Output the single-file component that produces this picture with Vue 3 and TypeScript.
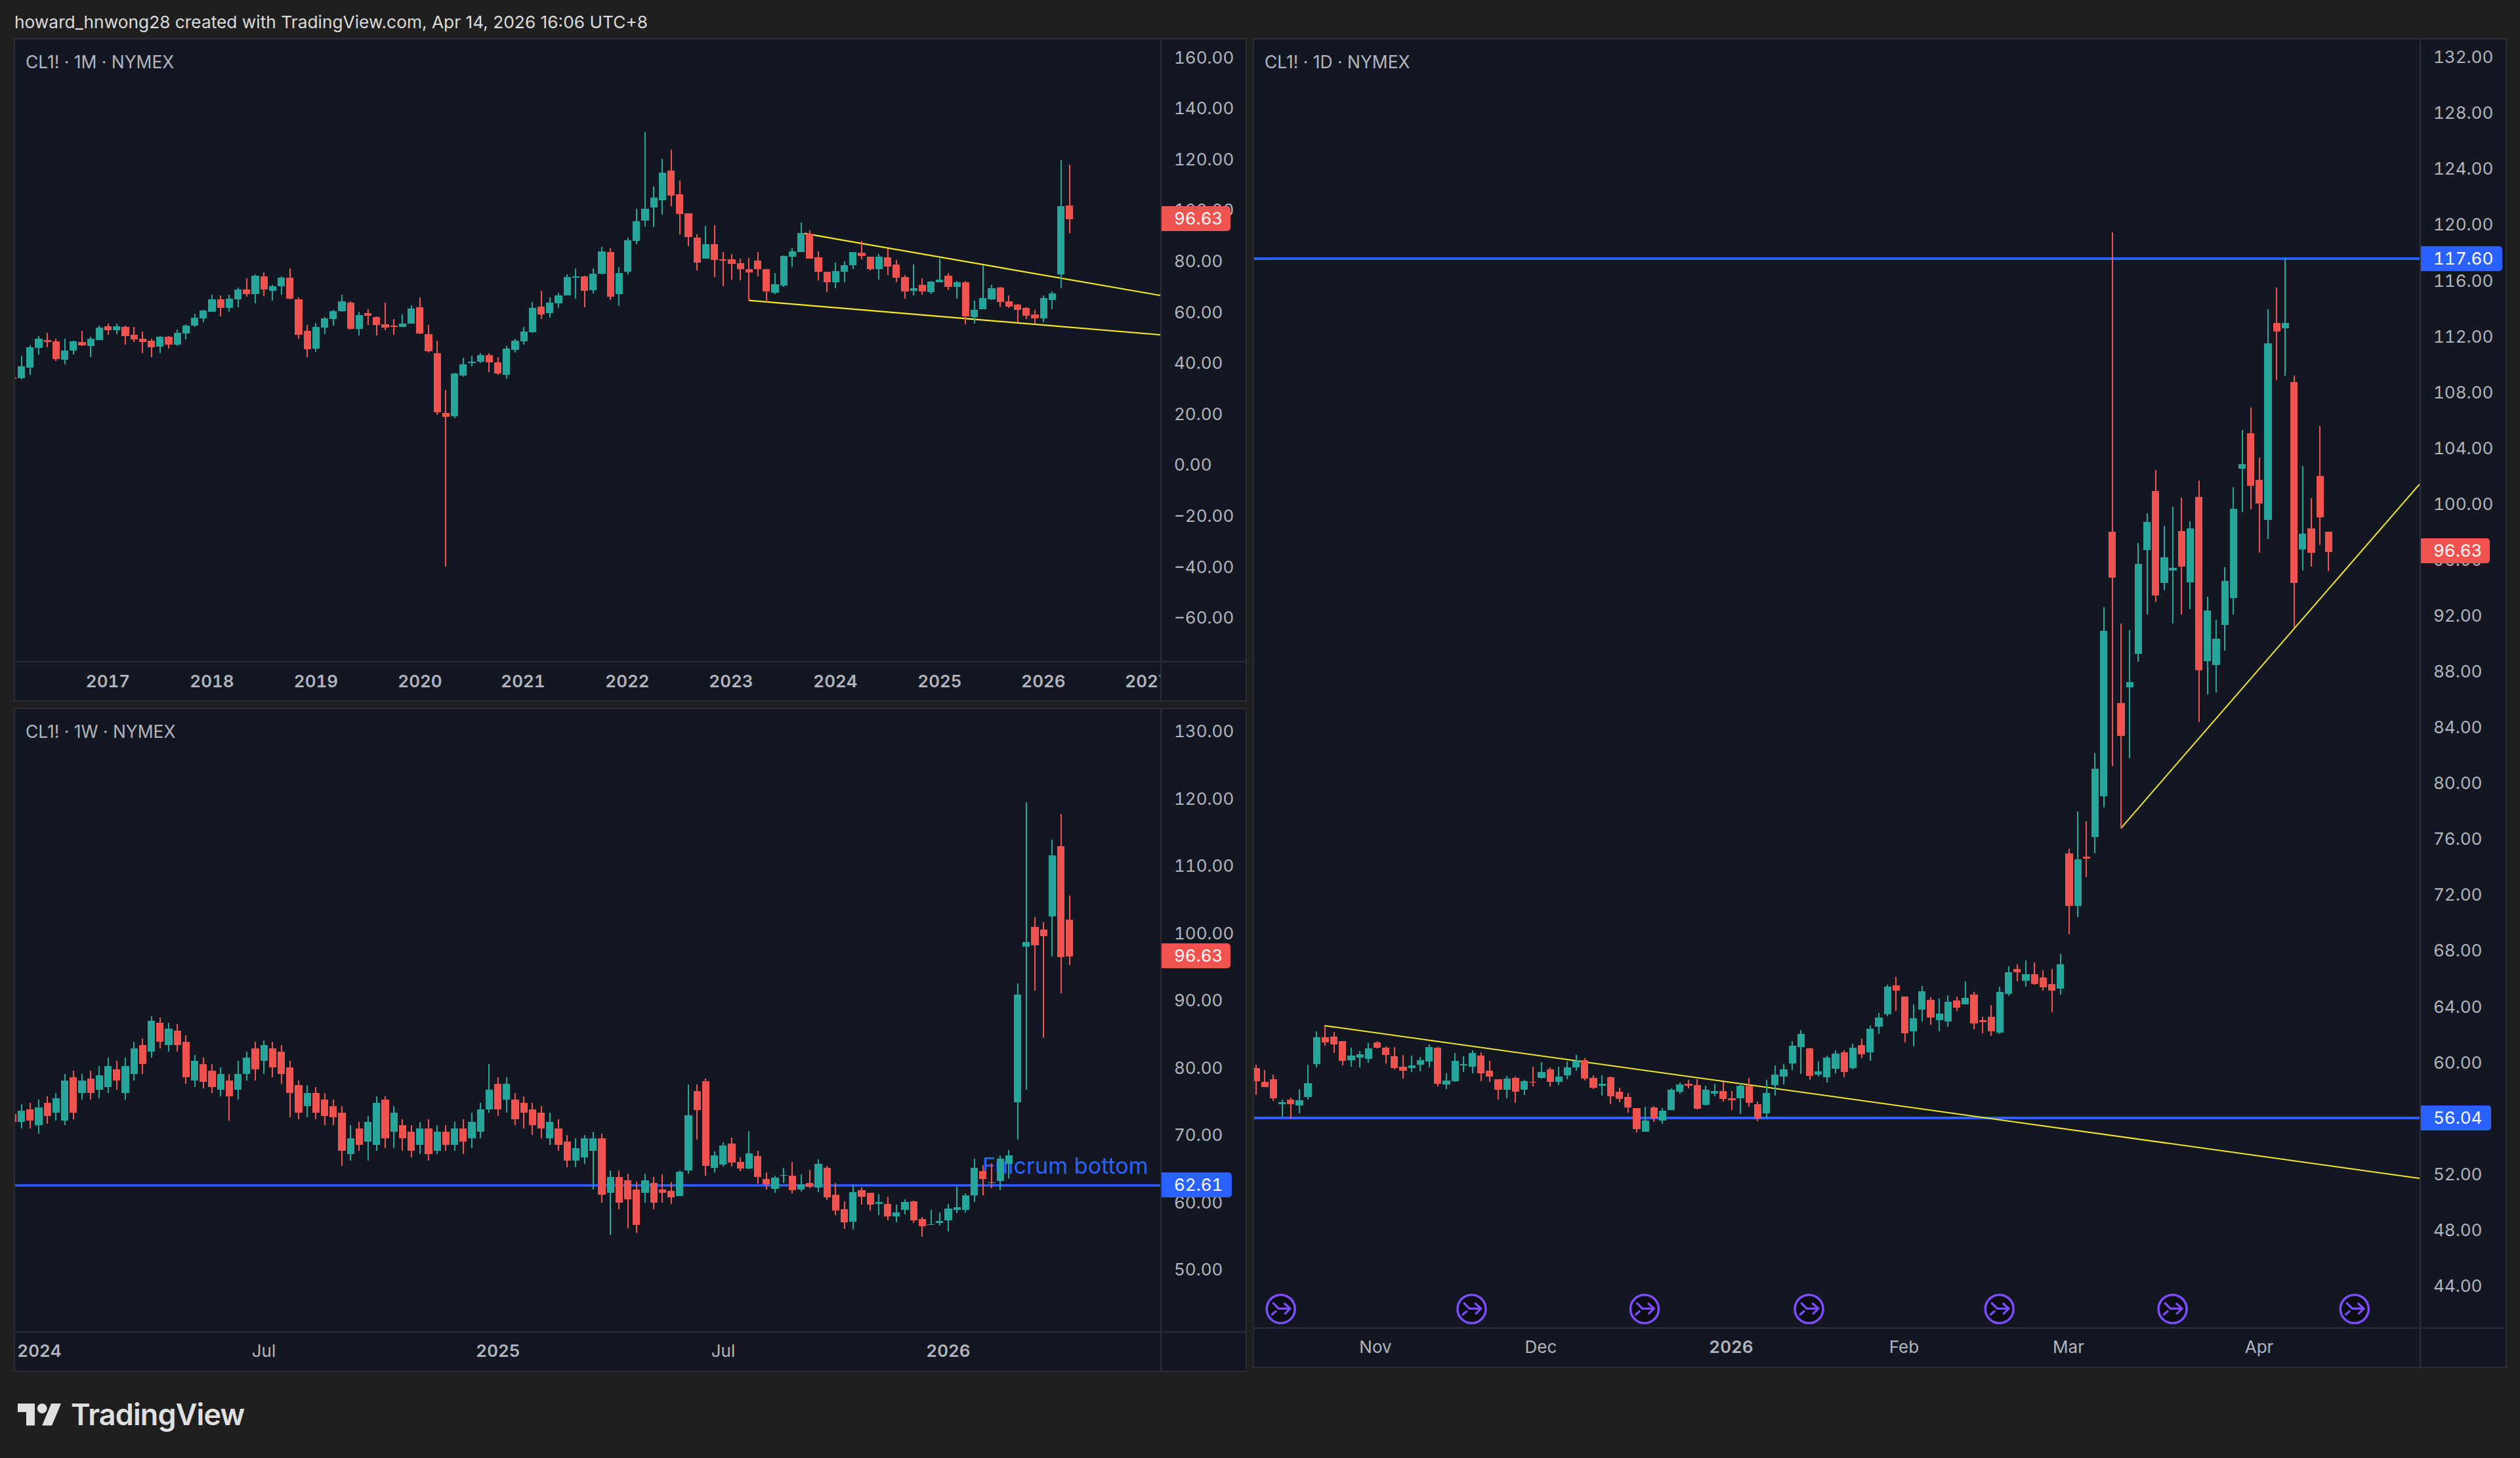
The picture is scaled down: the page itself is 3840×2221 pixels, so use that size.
<template>
  <div class="page">
    <div class="header">howard_hnwong28 created with TradingView.com, Apr 14, 2026 16:06 UTC+8</div>

    <div class="charts">
      <section v-for="chart in charts" :key="chart.label" class="panel" :class="chart.cls">
        <div class="pane">
          <svg class="plot" :viewBox="`${chart.x} ${chart.y} ${chart.w} ${chart.h}`">
            <line
              v-for="(l, i) in chart.lines"
              :key="i"
              :x1="l.x1"
              :y1="l.y1"
              :x2="l.x2"
              :y2="l.y2"
              :stroke="l.color"
              :stroke-width="l.width"
            />
            <text v-if="chart.note" class="note" :x="chart.note.x" :y="chart.note.y">{{ chart.note.text }}</text>
            <g v-for="(c, i) in chart.candles" :key="i" :fill="c[4] ? UP : DOWN" shape-rendering="crispEdges">
              <rect :x="chart.x0 + i * chart.dx - 1" :y="c[2]" width="2" :height="c[3] - c[2]" />
              <rect :x="chart.x0 + i * chart.dx - 5.6" :y="c[0]" width="11.2" :height="c[1] - c[0]" />
            </g>
            <g v-for="x in chart.events" :key="x" :transform="`translate(${x} 1994)`">
              <circle r="21.5" fill="#0c0d12" stroke="#7e4dff" stroke-width="3.5" />
              <path
                d="M-12.3 -9.7 L-3.3 -.7 H14.3 M5 -9 L14.3 -.7 L5.7 8 M-14.3 9.3 L-6.7 2.7"
                fill="none"
                stroke="#7e4dff"
                stroke-width="3.2"
              />
            </g>
          </svg>
          <div class="title">{{ chart.label }}</div>
        </div>

        <div class="price-axis">
          <span v-for="p in chart.prices" :key="p.text" class="tick" :style="{ top: p.y - chart.y - 15 + 'px' }">{{ p.text }}</span>
          <span
            v-for="t in chart.tags"
            :key="t.text"
            class="tag"
            :class="t.blue ? 'tag-blue' : 'tag-red'"
            :style="{ top: t.y - chart.y - 19 + 'px' }"
          >{{ t.text }}</span>
        </div>

        <div class="time-axis">
          <span
            v-for="t in chart.times"
            :key="t.x"
            class="time"
            :class="{ strong: t.strong }"
            :style="{ left: t.x - chart.x + 'px' }"
          >{{ t.text }}</span>
        </div>
        <div class="corner"></div>
      </section>
    </div>

    <div class="footer">
      <svg class="logo" viewBox="0 4 35.5 18" fill="#e0e0e0">
        <path d="M14 22H7V11H0V4h14v18zM28 22h-8l7.5-18h8L28 22z" />
        <circle cx="20" cy="8" r="4" />
      </svg>
      <span class="wordmark">TradingView</span>
    </div>
  </div>
</template>

<script setup lang="ts">
// body top, body bottom, wick top, wick bottom, 1 = up candle
type Row = [number, number, number, number, number]

interface Line {
  x1: number
  y1: number
  x2: number
  y2: number
  color: string
  width: number
}

const UP = '#26a69a'
const DOWN = '#ef5350'
const BLUE = '#2962ff'
const YELLOW = '#f4e72c'

const toPage = (rows: Row[], y0: number, k: number): Row[] =>
  rows.map(([t, b, h, l, up]) => [y0 + t / k, y0 + b / k, y0 + h / k, y0 + l / k, up])

const monthly: Row[] = [
  ...toPage([
    [525,532,525,532,0],[474,528,427,533,1],[387,480,378,513,1],[349,390,337,421,1],[354,362,321,388,0],
    [359,440,347,450,0],[401,444,347,465,1],[361,402,357,421,1],[363,378,313,381,0],[347,381,340,431,1],
    [297,353,288,355,1],[291,310,279,331,0],[292,310,280,327,1],[293,335,288,376,0],[330,350,294,362,0],
    [349,362,316,414,0],[356,387,349,432,0],[338,385,335,414,1],[338,376,335,392,0],[321,376,306,380,1],
    [288,323,282,351,1],[252,288,235,293,1],[220,255,216,272,1],[168,225,148,225,1],[168,208,151,246,0],
    [165,208,148,225,1],[123,168,114,204,1],[123,145,73,155,0],[59,145,54,185,1],[64,123,45,152,0],
    [109,128,102,173,1],[69,109,64,146,1],[69,164,27,168,0],[168,330,160,347,0],[312,397,286,431,0],
    [295,393,276,407,1],[255,296,249,326,1],[222,258,215,289,1],[177,223,148,225,1],[184,303,178,305,0],
    [241,303,225,333,1],[232,244,212,284,0],[248,284,245,333,0],[282,296,184,308,0],[288,293,259,329,0],
    [279,293,238,293,1],[210,279,195,279,1],[205,324,158,328,0],[328,404,286,410,0],[413,684,357,695,0],
    [686,706,583,1388,0],[507,703,503,710,1],[465,515,435,521,1],[453,459,427,473,1],[424,454,413,460,1],
    [423,455,415,500,0],[457,508,433,514,0],[394,514,381,530,1],[357,399,347,410,1],[314,361,295,374,1],
    [206,319,181,322,1],[201,236,129,257,0],[182,232,160,251,1],[150,185,138,207,1],[66,150,55,150,1],
    [62,69,27,166,1],[62,128,60,204,0],[51,126,28,140,1],
  ], 400, 3),
  [383,417,376,418,1],[384,452,378,457,0],[416,448,407,466,1],[366,414,362,418,1],
  [337,367,318,372,1],[318,336,201,345,1],[301,316,284,346,1],
  ...toPage([
    [248,375,187,440,1],[239,354,144,402,0],[349,437,286,530,0],[436,543,436,585,0],[547,660,530,695,0],
    [576,642,492,642,1],[576,647,490,727,0],[645,650,613,767,0],[644,667,620,739,0],[663,689,643,741,0],
    [689,704,638,833,0],[652,691,611,722,0],[689,793,689,840,0],[760,798,708,805,1],[630,765,628,772,1],
    [609,633,594,680,1],[526,611,477,611,1],[527,642,512,642,0],[635,701,609,741,0],[702,750,702,795,0],
    [699,750,660,776,1],[672,702,655,751,1],[613,672,613,690,1],[616,630,561,645,0],[634,690,634,696,0],
    [633,690,622,739,1],[635,678,598,716,0],[668,729,648,751,0],[726,791,717,824,0],[776,789,669,809,1],
    [763,793,733,806,0],[748,794,744,803,1],[738,749,641,749,1],[720,772,708,785,0],[750,772,745,824,1],
    [750,906,743,941,0],[875,908,835,939,1],[823,873,672,873,1],[776,829,763,831,1],[775,840,772,865,0],
    [838,860,810,866,0],[853,876,850,932,0],[868,904,865,917,0],[896,916,877,938,0],[823,916,810,933,1],
    [801,831,793,873,1],[403,713,192,777,1],[399,462,212,525,0],
  ], 180, 3),
]

const weekly: Row[] = [
  ...toPage([
    [693,698,690,702,0],[691,698,687,702,1],[690,697,686,702,0],[689,700,684,705,1],[686,694,682,699,0],
    [683,692,680,697,1],[672,697,668,700,1],[670,692,666,696,0],[672,680,668,684,1],[671,680,666,684,0],
    [669,678,663,683,1],[663,676,658,680,1],[665,672,660,678,0],[663,680,658,684,1],[652,668,648,672,1],
    [650,662,646,668,0],[635,654,632,658,1],[636,648,633,652,0],[640,650,636,654,1],[641,650,637,654,0],
    [648,670,644,674,0],[660,672,656,676,1],[662,673,658,677,0],[666,676,662,680,0],[668,678,664,682,1],
    [672,682,668,697,0],[668,678,660,684,1],[658,668,654,672,1],[652,665,648,672,0],[650,660,647,668,1],
    [652,664,648,670,0],[654,668,650,674,0],[664,680,660,695,0],[675,692,672,696,0],[680,688,675,695,1],
    [680,692,676,696,0],[684,694,680,700,0],[688,695,684,700,0],[692,716,688,725,0],[708,718,700,722,1],
    [702,712,698,716,0],[698,710,694,722,1],[686,712,682,716,1],[684,708,682,714,0],[692,704,688,714,1],
    [700,708,696,716,0],[704,716,700,720,0],[702,712,698,718,1],[702,718,696,722,0],[704,716,700,718,1],
    [704,712,700,716,0],[702,712,698,716,1],[702,710,696,718,0],[698,708,692,714,1],[690,704,686,708,1],
    [678,690,662,692,1],[674,690,670,694,0],[674,684,670,692,1],[684,696,680,700,0],[686,692,682,702,0],
    [690,700,686,706,0],[692,702,688,708,0],[698,708,692,712,1],[702,712,696,716,0],[710,722,706,726,0],
    [714,722,708,726,1],[708,720,706,724,1],[708,716,704,740,1],[708,743,705,748,0],[732,742,728,768,1],
    [732,748,728,752,0],[734,746,730,764,0],[740,762,735,767,0],[734,742,730,748,1],[736,748,732,752,0],
  ], 0, 1 / 2.449),
  ...toPage([
    [935,952,867,995,0],[942,973,902,1003,0],[855,965,848,965,1],[596,850,455,865,1],[487,572,457,707,0],
    [442,828,428,872,0],[780,838,763,858,1],[735,823,720,830,1],[727,812,700,830,0],[810,840,790,852,0],
    [770,840,670,842,1],[784,878,758,910,0],[888,912,858,935,0],[883,932,873,952,1],[870,874,838,905,1],
    [874,940,810,953,0],[912,935,868,945,1],[905,923,847,930,0],[820,928,798,947,1],[838,972,828,983,0],
    [960,1032,905,1052,0],[1027,1086,990,1115,0],[949,1082,915,1120,1],[940,968,927,1006,0],[952,1006,950,1033,0],
    [992,1002,957,1053,1],[1002,1058,970,1076,0],[1042,1058,1005,1085,1],[994,1030,980,1050,1],[990,1076,987,1088,0],
    [1072,1105,1063,1151,0],[1094,1098,1030,1098,1],[1079,1088,1042,1102,1],[1023,1076,1003,1127,1],[1016,1030,923,1043,1],
    [963,1030,955,1042,1],[836,962,796,992,1],[851,888,825,962,0],[903,907,815,930,0],[796,898,780,938,1],
    [780,818,755,885,1],
  ], 1500, 3),
  ...toPage([
    [685,1043,648,1168,1],[511,528,48,1002,1],[462,523,430,673,0],[471,492,447,830,0],
    [225,426,171,560,1],[193,561,88,682,0],[438,559,358,589,0],
  ], 1200, 2.178),
]

const daily: Row[] = [
  ...toPage([
    [332,385,318,438,0],[387,407,340,407,0],[376,452,358,462,0],[468,476,457,524,1],[457,476,450,534,0],
    [461,481,416,512,1],[392,446,318,457,1],[209,315,186,328,1],[209,229,165,243,0],[207,238,188,272,0],
    [225,304,225,322,0],[283,301,252,327,1],[277,289,264,329,1],[253,295,232,310,1],[231,252,226,253,0],
    [252,280,245,314,0],[285,333,248,336,0],[326,342,280,374,0],[321,331,283,347,1],[301,318,287,344,1],
    [249,307,238,328,1],[250,395,248,405,0],[382,396,353,415,1],[304,384,273,388,1],[315,322,285,348,1],
    [271,327,262,353,1],[281,353,268,384,0],[343,367,303,388,0],[375,419,375,456,0],[373,419,362,452,1],
    [371,425,367,470,0],[384,419,378,440,1],[386,389,327,405,0],[347,371,309,374,1],[336,387,330,405,0],
    [367,386,327,400,1],[328,361,305,376,1],[304,329,280,342,1],[300,374,293,382,0],[371,409,360,415,0],
    [395,402,361,441,1],[368,445,365,476,0],[426,454,410,468,0],[447,489,431,510,0],[492,575,492,587,0],
    [542,585,487,585,1],[488,533,483,546,0],[502,540,490,553,1],[418,499,412,499,1],[398,426,390,435,1],
    [394,402,378,413,0],[400,494,375,497,0],[417,477,403,481,1],[422,434,395,444,1],[422,455,388,464,0],
    [453,460,423,499,0],[402,452,393,515,1],[402,470,370,485,0],[476,533,465,544,0],[432,511,380,533,1],
    [357,401,322,441,1],[337,367,315,397,1],[244,314,225,340,1],[197,248,180,355,1],[254,363,252,379,0],
    [345,358,306,367,1],[289,369,281,390,1],[275,335,261,352,1],[270,347,262,368,0],[250,331,235,338,1],
    [241,277,213,292,0],[176,268,163,302,1],[131,168,112,195,1],[8,118,0,126,1],
  ], 1500, 2.613),
  ...toPage([
    [714,725,696,770,0],[738,818,738,838,0],[785,813,755,847,1],[727,767,715,793,1],[745,784,740,800,0],
    [775,789,743,813,1],[750,792,735,803,1],[747,762,738,770,0],[741,755,705,755,1],[734,796,728,810,0],
    [790,794,783,818,0],[782,813,757,824,0],[728,817,717,819,1],[686,733,673,737,1],[678,686,668,706,0],
    [690,704,660,717,1],[690,711,664,713,0],[697,718,681,725,0],[711,725,678,773,0],[669,721,645,734,1],
    [427,542,417,603,0],[440,542,337,566,1],[435,439,358,479,0],[244,392,210,427,1],
  ], 1000, 1.425),
  [961,1212.6,925,1230,1],[810,879.5,354,1167,0],[1071,1121,949.5,1262,0],[1039,1047,960,1155,1],
  [859,995.5,827,1008,1],[795,837.5,782,936,1],[748,907,716,917,0],[849,887.5,801,899,1],
  [865,869,772,949.5,1],[808.5,863,757.6,936,0],[805,887,794,928,1],[756.7,1021,732,1100,0],
  [930,1007,909,1058,1],[973,1012.6,944,1055,1],[885,952,864,991,1],[775,911,741.5,936,1],
  [706.7,714,654.5,780,1],[660,740,621,776,0],[731,766.5,697,842,0],[523,791.5,471,821,1],
  [492,505,438,579,0],[492,500,393,573,1],[582,887.5,572,956,0],[813,837,710,869,1],
  [805,842,759,863,0],[725,788,649,830,0],[810,840.6,810,870,0],
]

function ticks(from: number, to: number, step: number, y0: number, perUnit: number) {
  const out: { text: string; y: number }[] = []
  for (let p = from; p >= to; p -= step) {
    const text = (p < 0 ? '\u2212' : '') + Math.abs(p).toFixed(2)
    out.push({ text, y: y0 + (from - p) * perUnit })
  }
  return out
}

const line = (x1: number, y1: number, x2: number, y2: number, color: string, width: number): Line => ({
  x1, y1, x2, y2, color, width,
})

const year = (x: number, text: string) => ({ x, text, strong: true })
const month = (x: number, text: string) => ({ x, text, strong: false })

const charts = [
  {
    label: 'CL1! · 1M · NYMEX',
    cls: 'panel-1m',
    x: 23,
    y: 60,
    w: 1745,
    h: 947,
    x0: 19.3,
    dx: 13.2,
    candles: monthly,
    lines: [
      line(1226, 355.7, 1768, 450, YELLOW, 2.2),
      line(1141.4, 457.7, 1768, 510, YELLOW, 2.2),
    ],
    note: null,
    events: [] as number[],
    prices: ticks(160, -60, 20, 87.5, 3.88),
    tags: [{ text: '96.63', y: 333, blue: false }],
    times: [
      year(164.5, '2017'), year(323, '2018'), year(481.5, '2019'), year(640, '2020'), year(797, '2021'),
      year(956, '2022'), year(1114, '2023'), year(1273, '2024'), year(1432, '2025'), year(1590, '2026'),
      year(1748, '2027'),
    ],
  },
  {
    label: 'CL1! · 1W · NYMEX',
    cls: 'panel-1w',
    x: 23,
    y: 1080,
    w: 1745,
    h: 948,
    x0: 19.3,
    dx: 13.2,
    candles: weekly,
    lines: [line(23, 1805.7, 1768, 1805.7, BLUE, 3.6)],
    note: { text: 'Fulcrum bottom', x: 1497, y: 1788 },
    events: [] as number[],
    prices: ticks(130, 50, 10, 1114, 10.25),
    tags: [
      { text: '96.63', y: 1456, blue: false },
      { text: '62.61', y: 1805, blue: true },
    ],
    times: [
      year(60, '2024'), month(402, 'Jul'), year(759, '2025'), month(1102, 'Jul'), year(1445, '2026'),
    ],
  },
  {
    label: 'CL1! · 1D · NYMEX',
    cls: 'panel-1d',
    x: 1911,
    y: 60,
    w: 1776,
    h: 1962,
    x0: 1914,
    dx: 13.18,
    candles: daily,
    lines: [
      line(1911, 394, 3687, 394, BLUE, 4),
      line(1911, 1703, 3687, 1703, BLUE, 4),
      line(2018, 1562.4, 3687, 1795, YELLOW, 2),
      line(3231.7, 1261.8, 3687, 737.5, YELLOW, 2),
    ],
    note: null,
    events: [1951.7, 2242.5, 2506, 2756.5, 3046.7, 3310.6, 3587.8],
    prices: ticks(132, 44, 4, 87.2, 21.27),
    tags: [
      { text: '117.60', y: 394, blue: true },
      { text: '96.63', y: 839, blue: false },
      { text: '56.04', y: 1703, blue: true },
    ],
    times: [
      month(2096, 'Nov'), month(2348, 'Dec'), year(2638, '2026'), month(2901.5, 'Feb'), month(3152, 'Mar'),
      month(3442.6, 'Apr'),
    ],
  },
]
</script>

<style>
html,
body {
  margin: 0;
  background: #1f1f1f;
}
</style>

<style scoped>
.page {
  width: 3840px;
  height: 2221px;
  background: #1f1f1f;
  font-family: Inter, "Liberation Sans", sans-serif;
  overflow: hidden;
}

.header {
  height: 58px;
  padding-left: 22px;
  box-sizing: border-box;
  line-height: 68px;
  font-size: 26.3px;
  color: #dbdbdb;
  white-space: nowrap;
}

.charts {
  display: grid;
  grid-template-columns: 1879px 1911px;
  grid-template-rows: 1011px 1012px;
  gap: 9px;
  padding-left: 21px;
}

.panel {
  display: grid;
  grid-template-rows: 1fr 60px;
  grid-template-columns: 1fr 130px;
  border: 2px solid #2a2d35;
  background: #131722;
  box-sizing: border-box;
  min-height: 0;
}

.panel-1d {
  grid-column: 2;
  grid-row: 1 / span 2;
  height: 2026px;
  grid-template-columns: 1fr 131px;
}

.pane {
  position: relative;
  min-height: 0;
  min-width: 0;
}

.plot {
  display: block;
  width: 100%;
  height: 100%;
}

.title {
  position: absolute;
  left: 16px;
  top: 19px;
  font-size: 26.4px;
  line-height: 30px;
  color: #b2b5be;
  white-space: nowrap;
}

.note {
  font-size: 34.2px;
  fill: #2962ff;
}

.price-axis {
  position: relative;
  border-left: 2px solid #2a2e39;
  overflow: hidden;
  font-variant-numeric: tabular-nums;
}

.tick {
  position: absolute;
  left: 19px;
  font-size: 26px;
  line-height: 30px;
  color: #b2b5be;
  white-space: nowrap;
}

.tag {
  position: absolute;
  left: 0;
  height: 38px;
  padding: 0 14px 0 19px;
  border-radius: 0 5px 5px 0;
  font-size: 26px;
  line-height: 38px;
  color: #fff;
  white-space: nowrap;
}

.tag-red {
  background: #f05350;
  padding-right: 12px;
}

.tag-blue {
  background: #2962ff;
}

.time-axis {
  position: relative;
  border-top: 2px solid #2a2e39;
  overflow: hidden;
  font-variant-numeric: tabular-nums;
}

.time {
  position: absolute;
  top: 13px;
  transform: translateX(-50%);
  font-size: 26px;
  line-height: 30px;
  color: #b2b5be;
  white-space: nowrap;
}

.panel-1m .time {
  top: 14px;
}

.strong {
  font-weight: 600;
}

.corner {
  border-top: 2px solid #2a2e39;
  border-left: 2px solid #2a2e39;
}

.footer {
  display: flex;
  align-items: center;
  gap: 15px;
  padding: 40px 0 0 27px;
}

.logo {
  width: 66px;
  height: 33.5px;
}

.wordmark {
  font-size: 45px;
  line-height: 50px;
  font-weight: 600;
  color: #e0e0e0;
  letter-spacing: -0.9px;
}
</style>
